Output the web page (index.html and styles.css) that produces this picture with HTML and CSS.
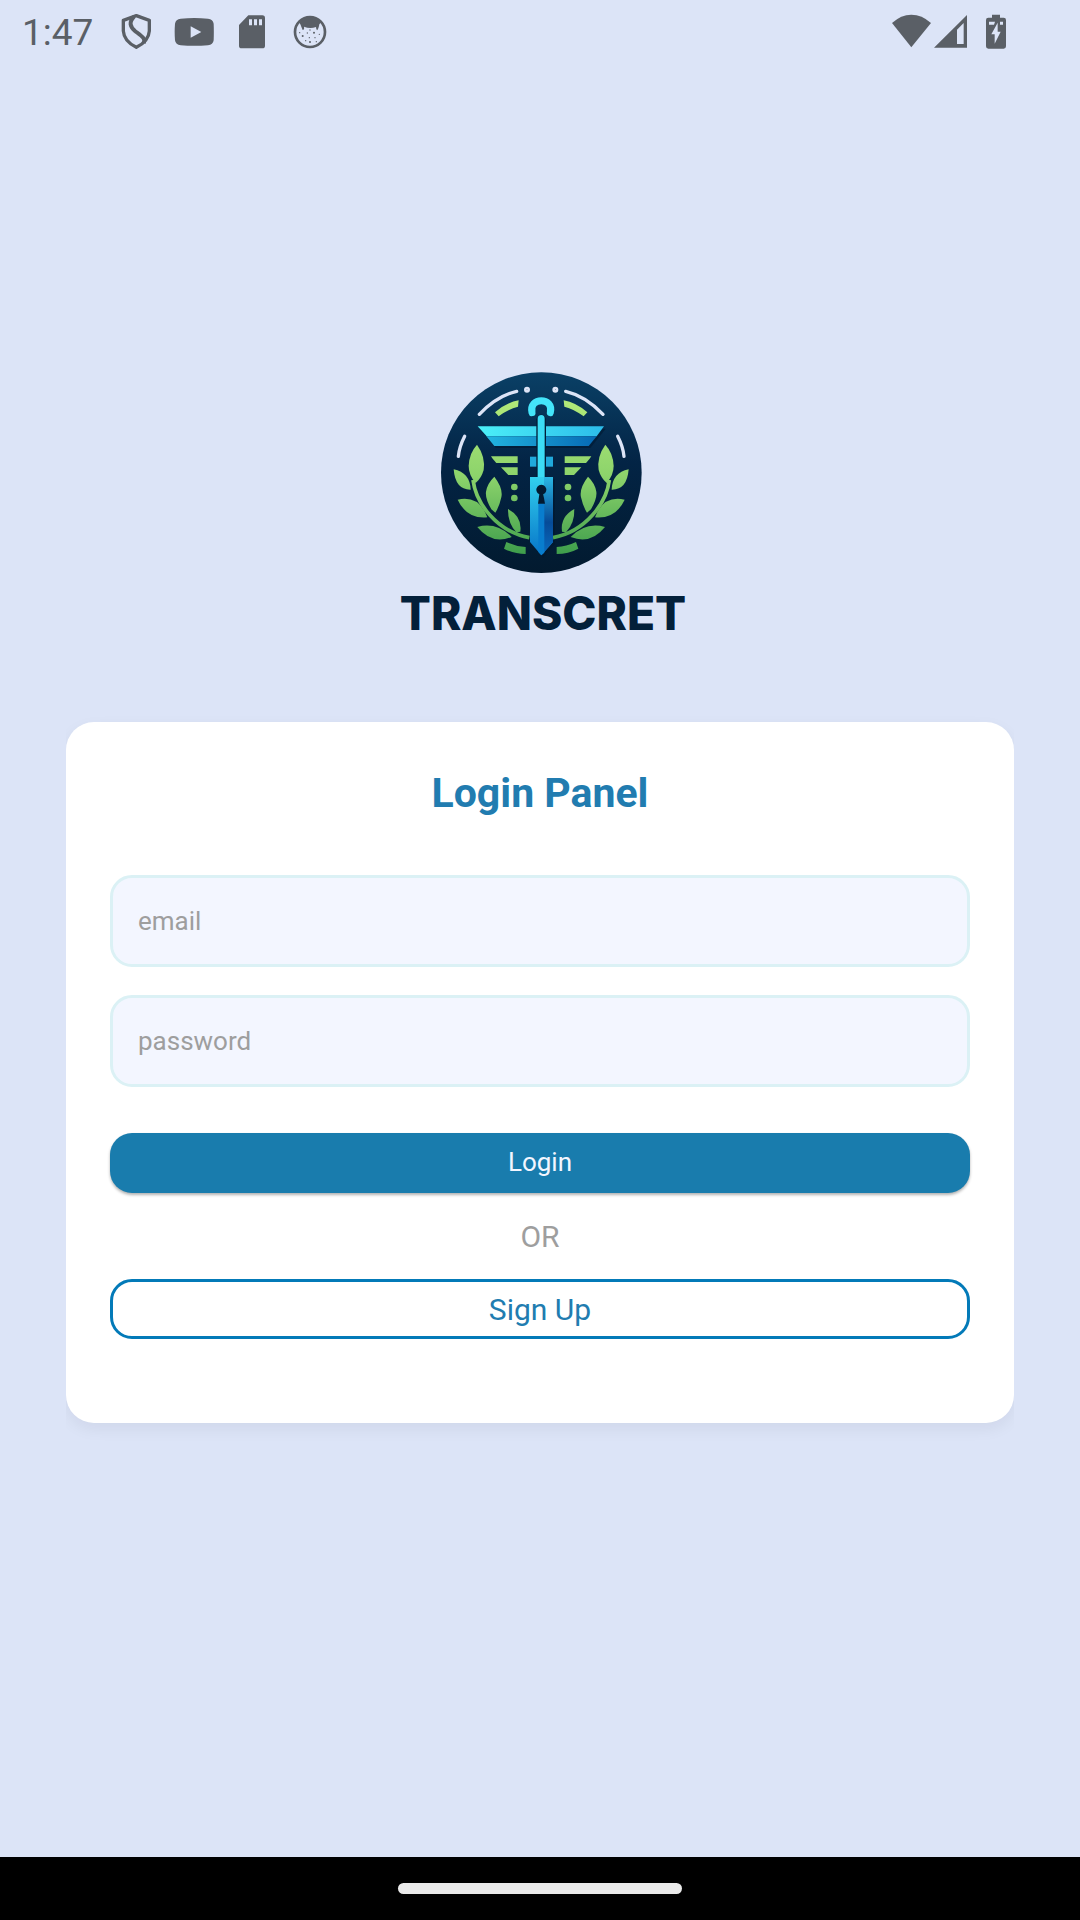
FILE: index.html
```html
<!DOCTYPE html>
<html lang="en">
<head>
<meta charset="utf-8">
<meta name="viewport" content="width=device-width, initial-scale=1">
<title>Transcret – Login</title>
<link rel="stylesheet" href="styles.css">
</head>
<body>
<header class="status-bar">
  <time class="clock">1:47</time>
  <div class="notifications">
    <svg class="note-icon" viewBox="348 38 120 111" aria-hidden="true">
      <path d="M409 46 L448 60 V92 Q446 123 409 141 Q372 123 370 92 V60 Z" fill="none" stroke="currentColor" stroke-width="10" stroke-linejoin="round"/>
      <path d="M402 49 C386 66 390 79 405 92 C426 108 438 115 431 128" fill="none" stroke="currentColor" stroke-width="12"/>
    </svg>
    <svg class="note-icon" viewBox="520 38 120 111" aria-hidden="true">
      <path fill="currentColor" fill-rule="evenodd" d="M540 55 Q581 51 622 55 Q637 56 639 70 Q640 95 639 120 Q637 134 622 135 Q581 138 540 135 Q525 134 523 120 Q521 95 523 70 Q525 56 540 55 Z M570 78 V112 L602 95 Z"/>
    </svg>
    <svg class="note-icon" viewBox="696 38 120 111" aria-hidden="true">
      <path fill="currentColor" fill-rule="evenodd" d="M745 45 H787 Q795 45 795 53 V136 Q795 144 787 144 H725 Q717 144 717 136 V74 Z M747 57 V75 H756 V57 Z M762 57 V75 H771 V57 Z M777 57 V75 H786 V57 Z"/>
    </svg>
    <svg class="note-icon" viewBox="870 38 120 111" aria-hidden="true">
      <circle cx="930" cy="95" r="45" fill="none" stroke="currentColor" stroke-width="8"/>
      <path fill="currentColor" d="M896 65 Q930 38 964 65 L958 72 Q956 86 951 90 Q948 86 948 80 Q930 86 912 79 Q914 88 908 89 Q904 80 901 72 Z"/>
      <g fill="currentColor">
        <circle cx="908" cy="107" r="3"/><circle cx="942" cy="97" r="3"/><circle cx="922" cy="98" r="2"/><circle cx="928" cy="112" r="2"/><circle cx="945" cy="112" r="2"/><circle cx="930" cy="125" r="3"/><circle cx="958" cy="102" r="2"/><circle cx="917" cy="121" r="2"/><circle cx="899" cy="97" r="2"/><circle cx="930" cy="89" r="2"/><circle cx="949" cy="124" r="2"/>
      </g>
    </svg>
  </div>
  <div class="system">
    <svg class="wifi" viewBox="96 40 117 102" aria-hidden="true">
      <path fill="currentColor" d="M96 67 Q123 42 154 42 Q186 42 213 67 L154 140 Z"/>
    </svg>
    <svg class="signal" viewBox="222 40 99 102" aria-hidden="true">
      <path fill="currentColor" fill-rule="evenodd" d="M321 43 V141 H222 Z M311 67 L291 87 V130 H311 Z"/>
    </svg>
    <svg class="battery" viewBox="378 40 60 105" aria-hidden="true">
      <path fill="currentColor" fill-rule="evenodd" d="M396 42 H420 V51 H431 Q438 51 438 58 V137 Q438 144 431 144 H385 Q378 144 378 137 V58 Q378 51 385 51 H396 Z M387 63 V72 H402 L405 63 Z M413 66 L394 101 H404 V129 L422 93 H413 Z M420 63 V72 H429 V63 Z"/>
    </svg>
  </div>
</header>

<main class="login-screen">
  <div class="brand">
    <svg class="emblem" viewBox="57 36 864 606" aria-hidden="true">
      <defs>
        <linearGradient id="disc" x1="0" y1="0" x2="0" y2="1"><stop offset="0" stop-color="#0a4066"/><stop offset=".45" stop-color="#032445"/><stop offset="1" stop-color="#021a2f"/></linearGradient>
        <linearGradient id="leaf" gradientUnits="userSpaceOnUse" x1="0" y1="120" x2="0" y2="580"><stop offset="0" stop-color="#b2ea79"/><stop offset=".5" stop-color="#8cd36b"/><stop offset="1" stop-color="#3f9e4c"/></linearGradient>
        <linearGradient id="bar" x1="0" y1="0" x2="1" y2="0"><stop offset="0" stop-color="#4cf0f8"/><stop offset="1" stop-color="#2cbcea"/></linearGradient>
        <linearGradient id="bar-low" x1="0" y1="0" x2="1" y2="0"><stop offset="0" stop-color="#22b5e0"/><stop offset="1" stop-color="#0669b4"/></linearGradient>
        <linearGradient id="blade" x1="0" y1="0" x2="0" y2="1"><stop offset="0" stop-color="#32d0ee"/><stop offset="1" stop-color="#0775c8"/></linearGradient>
        <linearGradient id="blade-dark" x1="0" y1="0" x2="0" y2="1"><stop offset="0" stop-color="#2ab7e4"/><stop offset=".6" stop-color="#064b98"/><stop offset="1" stop-color="#0a69bd"/></linearGradient>
        <g id="branch" fill="url(#leaf)">
          <path d="M279 360 C288 430 350 515 448 533" fill="none" stroke="url(#leaf)" stroke-width="11"/>
          <path d="M291 254 Q317 290 311 330 Q304 355 287 369 Q266 345 266 318 Q267 280 291 254 Z"/>
          <path d="M221 328 Q270 338 272 389 Q226 390 221 328 Z"/>
          <path d="M343 350 Q370 385 364 412 Q358 440 346 458 L334 448 Q315 415 318 395 Q322 370 343 350 Z"/>
          <path d="M233 419 Q298 405 322 472 Q260 478 233 419 Z"/>
          <path d="M384 447 Q427 470 421 515 L409 517 Q383 490 384 447 Z"/>
          <path d="M292 501 Q350 485 395 531 Q335 555 292 501 Z"/>
          <path d="M379 546 Q408 560 437 561 V582 Q402 582 372 566 Z"/>
          <path d="M333 289 H413 V309 H349 Q338 298 333 289 Z"/>
          <path d="M363 322 H413 V345 H385 Z"/>
          <circle cx="403" cy="381" r="10"/><circle cx="403" cy="414" r="10"/>
          <path d="M416 121 L414 140 Q385 147 356 169 L345 157 Q380 127 416 121 Z"/>
        </g>
        <g id="arcs" fill="none" stroke="#dce4f7" stroke-width="10" stroke-linecap="round">
          <path d="M298 163 Q350 108 410 94"/><path d="M254 229 Q238 260 235 289"/>
          <circle cx="441" cy="89" r="4"/>
        </g>
      </defs>
      <circle cx="484" cy="338" r="301" fill="url(#disc)"/>
      <g fill="#01152b" opacity=".5" transform="translate(5 7)">
        <path d="M293 199 H672 L626 257 H343 Z"/><path d="M450 351 H519 V546 L484 586 L450 546 Z"/>
      </g>
      <use href="#branch"/><use href="#branch" transform="matrix(-1 0 0 1 967 0)"/>
      <use href="#arcs"/><use href="#arcs" transform="matrix(-1 0 0 1 967 0)"/>
      <path d="M293 199 H672 L650 229 H320 Z" fill="url(#bar)"/>
      <path d="M319 229 H650 L626 258 H343 Z" fill="url(#bar-low)"/>
      <path d="M450 290 H519 V320 H450 Z" fill="#20a9dc"/>
      <path d="M456 158 C445 110 523 110 511 158" fill="none" stroke="#44e5fa" stroke-width="21" stroke-linecap="round"/>
      <path d="M469 352 V178 Q473 164 484 164 Q495 164 498 178 V352 Z" fill="#021d38"/>
      <path d="M473 352 V176 Q473 165 484 165 Q494 165 494 176 V352 Z" fill="#3cdcf5"/>
      <path d="M450 351 H519 V546 L484 586 L450 546 Z" fill="url(#blade)"/>
      <path d="M492 351 H519 V546 L492 577 Z" fill="url(#blade-dark)"/>
      <path d="M475 430 H493 V578 L484 586 L475 576 Z" fill="#087dce"/>
      <path d="M474 431 L478 403 A15 15 0 1 1 490 403 L495 431 Z" fill="#021a31"/>
    </svg>
    <h1 class="wordmark">TRANSCRET</h1>
  </div>

  <form class="card" action="#" method="post">
    <h2 class="card-title">Login Panel</h2>
    <div class="fields">
      <input class="field" type="email" name="email" placeholder="email" aria-label="email">
      <input class="field" type="password" name="password" placeholder="password" aria-label="password">
    </div>
    <button class="button button-primary" type="submit">Login</button>
    <p class="divider">OR</p>
    <button class="button button-outline" type="button">Sign Up</button>
  </form>
</main>

<footer class="nav-bar"><div class="home-pill"></div></footer>
</body>
</html>
```

FILE: styles.css
```css
* {
  box-sizing: border-box;
}

body {
  margin: 0;
  min-height: 100vh;
  display: flex;
  flex-direction: column;
  background: #dce4f7;
  font-family: Roboto, "Noto Sans", sans-serif;
}

.status-bar {
  display: flex;
  align-items: center;
  height: 62px;
  padding: 0 74px 0 22px;
  color: #5a5f66;
}

.clock {
  width: 94px;
  padding-top: 4px;
  font-size: 37px;
  line-height: 44px;
}

.notifications {
  display: flex;
  gap: 18px;
}

.note-icon {
  width: 40px;
  height: 37px;
}

.system {
  display: flex;
  align-items: center;
  margin-left: auto;
}

.wifi {
  width: 39px;
  height: 34px;
  margin-right: 3px;
}

.signal {
  width: 33px;
  height: 34px;
  margin-right: 19px;
}

.battery {
  width: 20px;
  height: 35px;
}

.login-screen {
  flex: 1;
  display: flex;
  flex-direction: column;
  padding: 310px 66px 64px;
}

.brand {
  display: flex;
  flex-direction: column;
  align-items: center;
  margin-bottom: 78px;
  padding-left: 6px;
}

.emblem {
  width: 288px;
  height: 202px;
}

.wordmark {
  margin: 9px 0 1px;
  color: #03203a;
  font-family: Inter, sans-serif;
  font-size: 46px;
  font-weight: 800;
  line-height: 60px;
}

.card {
  display: flex;
  flex-direction: column;
  padding: 45px 44px 84px;
  border-radius: 28px;
  background: #fff;
  box-shadow: 0 6px 16px rgba(0, 20, 40, 0.06);
  clip-path: inset(-40px 0);
}

.card-title {
  margin: 0 0 56px;
  color: #217cb0;
  font-size: 41px;
  font-weight: 700;
  line-height: 52px;
  text-align: center;
}

.fields {
  display: flex;
  flex-direction: column;
  gap: 28px;
  margin-bottom: 46px;
}

.field {
  width: 100%;
  height: 92px;
  padding: 0 25px;
  border: 3px solid #dbf1f5;
  border-radius: 22px;
  background: #f3f6ff;
  color: #333;
  font: 26px/32px Roboto, "Noto Sans", sans-serif;
}

.field::placeholder {
  color: #9e9e9e;
  opacity: 1;
}

.button {
  height: 60px;
  padding: 0;
  border: 0;
  border-radius: 22px;
  font-family: inherit;
}

.button-primary {
  padding-bottom: 2px;
  background: #197cad;
  box-shadow: 0 2px 3px rgba(0, 0, 0, 0.3);
  color: #f3f6ff;
  font-size: 26px;
}

.divider {
  margin: 23px 0 21px;
  color: #9e9e9e;
  font-size: 30px;
  line-height: 42px;
  text-align: center;
}

.button-outline {
  border: 3px solid #037ab8;
  background: #fff;
  color: #217cb0;
  font-size: 30px;
}

.nav-bar {
  display: flex;
  justify-content: center;
  padding: 26px 0;
  background: #000;
}

.home-pill {
  width: 284px;
  height: 11px;
  border-radius: 6px;
  background: #eaeaea;
}
```
